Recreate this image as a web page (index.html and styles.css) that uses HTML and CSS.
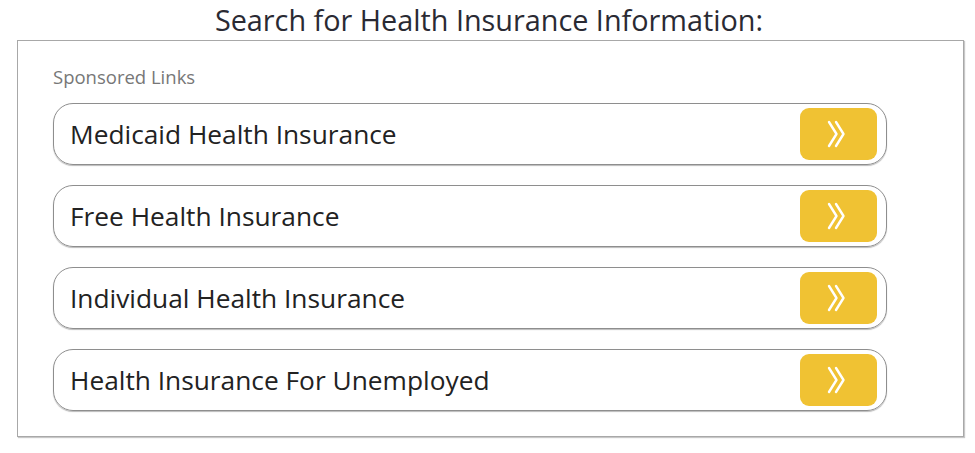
FILE: index.html
```html
<!DOCTYPE html>
<html>
<head>
<meta charset="utf-8">
<link rel="stylesheet" href="styles.css">
</head>
<body>
<h2 class="title">Search for Health Insurance Information:</h2>
<div class="box">
  <div class="sponsored">Sponsored Links</div>
  <div class="links">
    <a class="row" href="#"><span class="label">Medicaid Health Insurance</span><span class="btn"><svg class="chev" width="18" height="28" viewBox="0 0 18 28"><path d="M2 2 L9.5 14 L2 26 M9 2 L16.5 14 L9 26" fill="none" stroke="#fff" stroke-width="2.4" stroke-linecap="round" stroke-linejoin="round"/></svg></span></a>
    <a class="row" href="#"><span class="label">Free Health Insurance</span><span class="btn"><svg class="chev" width="18" height="28" viewBox="0 0 18 28"><path d="M2 2 L9.5 14 L2 26 M9 2 L16.5 14 L9 26" fill="none" stroke="#fff" stroke-width="2.4" stroke-linecap="round" stroke-linejoin="round"/></svg></span></a>
    <a class="row" href="#"><span class="label">Individual Health Insurance</span><span class="btn"><svg class="chev" width="18" height="28" viewBox="0 0 18 28"><path d="M2 2 L9.5 14 L2 26 M9 2 L16.5 14 L9 26" fill="none" stroke="#fff" stroke-width="2.4" stroke-linecap="round" stroke-linejoin="round"/></svg></span></a>
    <a class="row" href="#"><span class="label">Health Insurance For Unemployed</span><span class="btn"><svg class="chev" width="18" height="28" viewBox="0 0 18 28"><path d="M2 2 L9.5 14 L2 26 M9 2 L16.5 14 L9 26" fill="none" stroke="#fff" stroke-width="2.4" stroke-linecap="round" stroke-linejoin="round"/></svg></span></a>
  </div>
</div>
</body>
</html>
```
FILE: styles.css
```css
html, body {
  margin: 0;
  padding: 0;
  background: #fff;
}
body {
  font-family: "Open Sans", "Liberation Sans", sans-serif;
  color: #222;
  width: 975px;
  height: 453px;
  overflow: hidden;
}
.title {
  margin: 0;
  height: 40px;
  padding: 0 0 0 3px;
  box-sizing: border-box;
  text-align: center;
  font-weight: 400;
  font-size: 28.8px;
  line-height: 39px;
  color: #2a2a33;
}
.box {
  margin-left: 17px;
  width: 947px;
  height: 397px;
  border: 1px solid #a8a8a8;
  box-shadow: 1px 1px 1px #c8c8c8;
  box-sizing: border-box;
  padding: 25px 0 0 35px;
}
.sponsored {
  font-size: 18.5px;
  line-height: 22px;
  color: #777;
  height: 37px;
}
.links {
  display: flex;
  flex-direction: column;
  gap: 20px;
  width: 834px;
}
.row {
  display: flex;
  align-items: center;
  justify-content: space-between;
  height: 62px;
  box-sizing: border-box;
  border: 1px solid #8e8e8e;
  border-radius: 20px;
  box-shadow: 0 1px 1px #bbb;
  padding: 0 9px 0 16px;
  text-decoration: none;
  color: #222;
}
.label {
  font-size: 26.3px;
  line-height: 32px;
}
.btn {
  width: 77px;
  height: 52px;
  border-radius: 9px;
  background: #f0c233;
  display: flex;
  align-items: center;
  justify-content: center;
}
.chev {
  margin-right: 6px;
}
```
